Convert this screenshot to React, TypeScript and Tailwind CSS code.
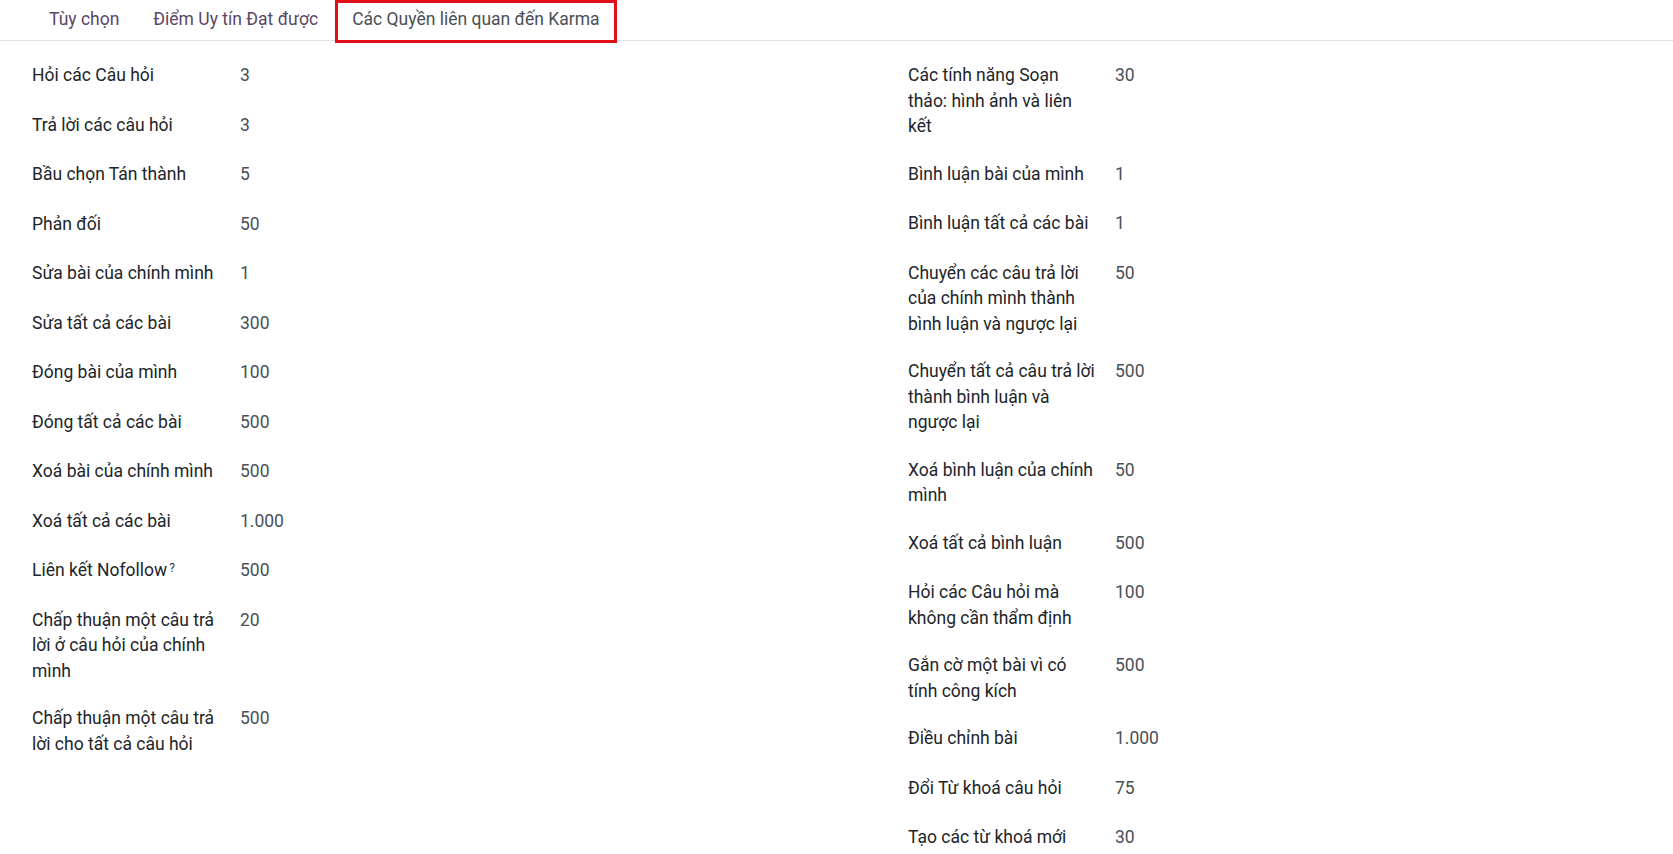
import React from "react";

type Row = { label: string[]; value: string; help?: boolean };

const leftRows: Row[] = [
  { label: ["Hỏi các Câu hỏi"], value: "3" },
  { label: ["Trả lời các câu hỏi"], value: "3" },
  { label: ["Bầu chọn Tán thành"], value: "5" },
  { label: ["Phản đối"], value: "50" },
  { label: ["Sửa bài của chính mình"], value: "1" },
  { label: ["Sửa tất cả các bài"], value: "300" },
  { label: ["Đóng bài của mình"], value: "100" },
  { label: ["Đóng tất cả các bài"], value: "500" },
  { label: ["Xoá bài của chính mình"], value: "500" },
  { label: ["Xoá tất cả các bài"], value: "1.000" },
  { label: ["Liên kết Nofollow"], value: "500", help: true },
  { label: ["Chấp thuận một câu trả", "lời ở câu hỏi của chính", "mình"], value: "20" },
  { label: ["Chấp thuận một câu trả", "lời cho tất cả câu hỏi"], value: "500" },
];

const rightRows: Row[] = [
  { label: ["Các tính năng Soạn", "thảo: hình ảnh và liên", "kết"], value: "30" },
  { label: ["Bình luận bài của mình"], value: "1" },
  { label: ["Bình luận tất cả các bài"], value: "1" },
  { label: ["Chuyển các câu trả lời", "của chính mình thành", "bình luận và ngược lại"], value: "50" },
  { label: ["Chuyển tất cả câu trả lời", "thành bình luận và", "ngược lại"], value: "500" },
  { label: ["Xoá bình luận của chính", "mình"], value: "50" },
  { label: ["Xoá tất cả bình luận"], value: "500" },
  { label: ["Hỏi các Câu hỏi mà", "không cần thẩm định"], value: "100" },
  { label: ["Gắn cờ một bài vì có", "tính công kích"], value: "500" },
  { label: ["Điều chỉnh bài"], value: "1.000" },
  { label: ["Đổi Từ khoá câu hỏi"], value: "75" },
  { label: ["Tạo các từ khoá mới"], value: "30" },
];

function Group({ rows, labelWidth }: { rows: Row[]; labelWidth: string }) {
  return (
    <div className="flex flex-col">
      {rows.map((row, i) => (
        <div key={i} className="flex pt-[10px] pb-[12px]">
          <div className={`${labelWidth} shrink-0 text-[#212529]`}>
            {row.label.map((line, j) => (
              <span key={j} className="block whitespace-nowrap">
                {line}
                {row.help && j === row.label.length - 1 && (
                  <sup className="ml-[2px] text-[12px] text-[#343a40] relative top-[-4px]">?</sup>
                )}
              </span>
            ))}
          </div>
          <div className="min-h-[27.5px] text-[#495057]">{row.value}</div>
        </div>
      ))}
    </div>
  );
}

export default function App() {
  return (
    <div
      className="min-h-screen bg-white text-[17.5px] leading-[25.5px]"
      style={{ fontFamily: "Roboto, 'Noto Sans', sans-serif" }}
    >
      {/* tabs */}
      <ul className="flex h-[41px] border-b border-[#dee2e6] pl-[32px]">
        <li className="px-[17px] pt-[7px] text-[#5a4766]">Tùy chọn</li>
        <li className="px-[17px] pt-[7px] text-[#5a4766]">Điểm Uy tín Đạt được</li>
        <li className="h-[43px] border-[3px] border-[#e10e17] bg-white px-[14px] pt-[4px] text-[#495057]">
          Các Quyền liên quan đến Karma
        </li>
      </ul>

      <div className="grid grid-cols-[876px_1fr] pl-[32px] pt-[12px]">
        <Group rows={leftRows} labelWidth="w-[208px]" />
        <Group rows={rightRows} labelWidth="w-[207px]" />
      </div>
    </div>
  );
}
